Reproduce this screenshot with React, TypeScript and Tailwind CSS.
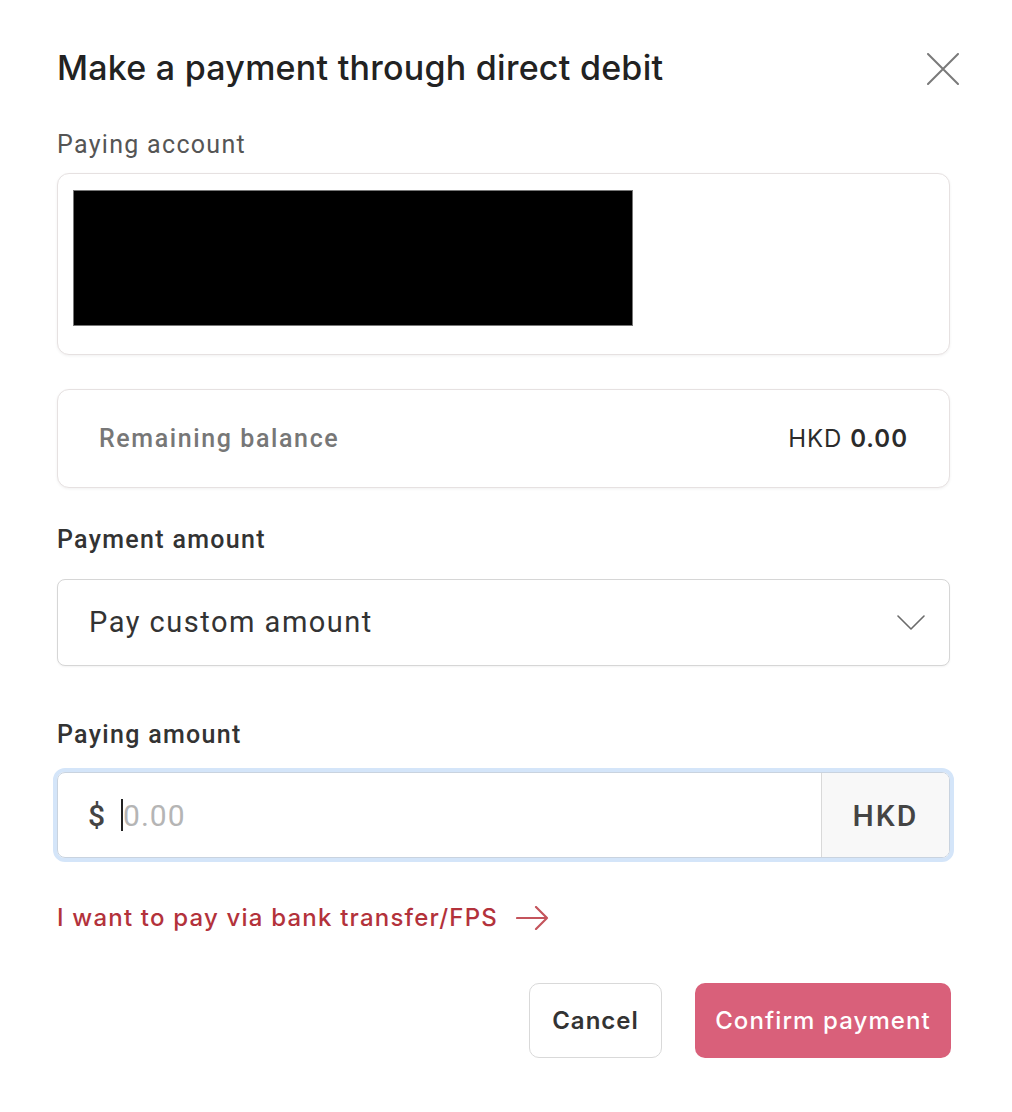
export default function App() {
  return (
    <div className="min-h-[1112px] w-[1012px] bg-white font-['Inter',sans-serif] text-[#2b2b2b]">
      <div className="ml-[57px] w-[893px] pt-[46px] pb-[50px]">
        {/* Header */}
        <div className="flex h-[46px] items-start justify-between">
          <h2 className="text-[34px] font-medium leading-[44px] tracking-[0.25px] text-[#222]">
            Make a payment through direct debit
          </h2>
          <button className="mt-[7px] -mr-[9px] text-[#7a7a7a]">
            <svg width="32" height="32" viewBox="0 0 32 32" fill="none" stroke="currentColor" strokeWidth="2" strokeLinecap="round">
              <path d="M1 1 L31 31 M31 1 L1 31" />
            </svg>
          </button>
        </div>

        {/* Paying account */}
        <div className="mt-[38px] font-['Roboto',sans-serif] text-[25px] leading-[30px] tracking-[1.3px] text-[#555]">Paying account</div>
        <div className="mt-[13px] h-[182px] rounded-[12px] border border-[#e6e1e1] bg-white px-[15px] pt-[16px] shadow-[0_1px_3px_rgba(0,0,0,0.06)]">
          <div className="h-[136px] w-[560px] border border-[#777] bg-black" />
        </div>

        {/* Remaining balance */}
        <div className="mt-[34px] flex h-[99px] items-center justify-between rounded-[12px] border border-[#e6e1e1] bg-white pl-[41px] pr-[41px] shadow-[0_1px_3px_rgba(0,0,0,0.06)]">
          <span className="font-['Roboto',sans-serif] text-[25px] font-medium tracking-[1.6px] text-[#777]">Remaining balance</span>
          <span className="text-[24px] tracking-[1px] text-[#2b2b2b]">
            HKD <span className="font-semibold">0.00</span>
          </span>
        </div>

        {/* Payment amount */}
        <div className="mt-[37px] font-['Roboto',sans-serif] text-[25px] font-medium leading-[30px] tracking-[1.3px] text-[#333]">Payment amount</div>
        <div className="mt-[24px] flex h-[87px] items-center justify-between rounded-[8px] border border-[#d6d6d6] bg-white pl-[31px] pr-[24px] shadow-[0_1px_2px_rgba(0,0,0,0.05)]">
          <span className="font-['Roboto',sans-serif] text-[29px] tracking-[1.5px] text-[#333]">Pay custom amount</span>
          <svg width="28" height="15" viewBox="0 0 28 15" fill="none" stroke="#6b6b6b" strokeWidth="1.6" strokeLinecap="round" strokeLinejoin="round">
            <path d="M1 1 L14 14 L27 1" />
          </svg>
        </div>

        {/* Paying amount */}
        <div className="mt-[54px] font-['Roboto',sans-serif] text-[25px] font-medium leading-[30px] tracking-[1.3px] text-[#333]">Paying amount</div>
        <div className="-mx-[4px] mt-[18px] rounded-[12px] border-[4px] border-[#d4e5f9]">
          <div className="flex h-[86px] items-stretch overflow-hidden rounded-[8px] border border-[#c9d3df] bg-white">
            <div className="flex flex-1 items-center pl-[30px]">
              <span className="font-['Roboto',sans-serif] text-[30px] font-medium text-[#444]">$</span>
              <span className="ml-[16px] h-[32px] w-[2px] bg-[#222]" />
              <span className="font-['Roboto',sans-serif] text-[30px] tracking-[1px] text-[#b5b5b5]">0.00</span>
            </div>
            <div className="flex w-[128px] items-center justify-center border-l border-[#d9d9d9] bg-[#f8f8f8] font-['Roboto',sans-serif] text-[30px] font-medium tracking-[2px] text-[#444]">
              HKD
            </div>
          </div>
        </div>

        {/* Link */}
        <div className="mt-[40px] flex h-[32px] items-center gap-[18px] text-[24px] font-medium tracking-[1.2px] text-[#b3323b]">
          <span>I want to pay via bank transfer/FPS</span>
          <svg width="33" height="24" viewBox="0 0 33 24" fill="none" stroke="#c4545c" strokeWidth="2.2" strokeLinecap="round" strokeLinejoin="round">
            <path d="M1 12 H31 M20 1 L31 12 L20 23" />
          </svg>
        </div>

        {/* Actions */}
        <div className="-mr-[1px] mt-[49px] flex justify-end gap-[33px]">
          <button className="h-[75px] w-[133px] rounded-[10px] border border-[#d9d9d9] bg-white text-[24px] font-semibold tracking-[1px] text-[#333]">
            Cancel
          </button>
          <button className="h-[75px] w-[256px] rounded-[10px] bg-[#d9607a] text-[24px] font-medium tracking-[1.1px] text-white">
            Confirm payment
          </button>
        </div>
      </div>
    </div>
  );
}
